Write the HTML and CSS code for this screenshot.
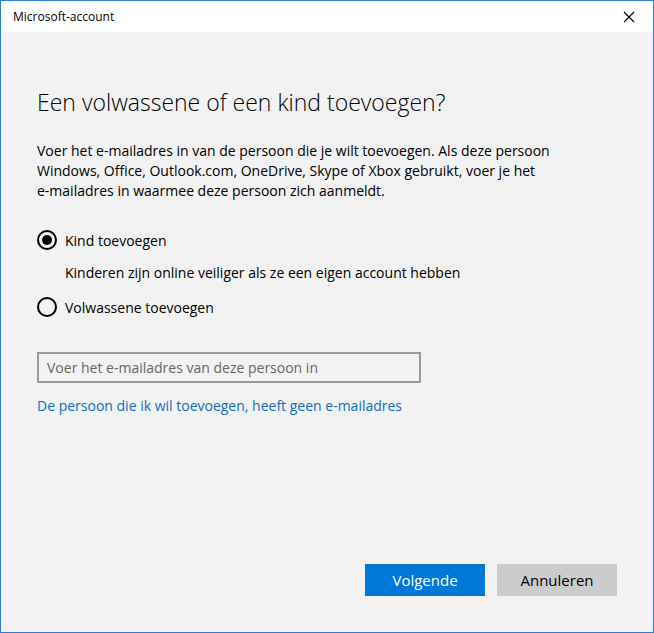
FILE: index.html
```html
<!DOCTYPE html>
<html>
<head>
<meta charset="utf-8">
<link rel="stylesheet" href="styles.css">
</head>
<body>
<div class="window">
  <div class="titlebar">
    <span class="title">Microsoft-account</span>
    <svg class="close" width="12" height="12" viewBox="0 0 12 12"><path d="M1 1L11 11M11 1L1 11" stroke="#000" stroke-width="1.1" fill="none"/></svg>
  </div>
  <div class="content">
    <h1 class="heading">Een volwassene of een kind toevoegen?</h1>
    <p class="intro">Voer het <span class="nowrap">e-mailadres</span> in van de persoon die je wilt toevoegen. Als deze persoon Windows, Office, Outlook.com, OneDrive, Skype of Xbox gebruikt, voer je het <span class="nowrap">e-mailadres</span> in waarmee deze persoon zich aanmeldt.</p>
    <div class="option first">
      <span class="radio checked"></span>
      <span class="label">Kind toevoegen</span>
    </div>
    <div class="hint">Kinderen zijn online veiliger als ze een eigen account hebben</div>
    <div class="option second">
      <span class="radio"></span>
      <span class="label">Volwassene toevoegen</span>
    </div>
    <div class="field">Voer het e-mailadres van deze persoon in</div>
    <a class="link" href="#">De persoon die ik wil toevoegen, heeft geen e-mailadres</a>
    <div class="spacer"></div>
    <div class="buttons">
      <div class="btn primary">Volgende</div>
      <div class="btn secondary">Annuleren</div>
    </div>
  </div>
</div>
</body>
</html>
```
FILE: styles.css
```css
html, body {
  margin: 0;
  padding: 0;
}
body {
  width: 654px;
  height: 633px;
  font-family: "Open Sans", "Noto Sans", sans-serif;
  color: #000;
}
.window {
  box-sizing: border-box;
  width: 654px;
  height: 633px;
  border: 1px solid #2b7cd3;
  display: flex;
  flex-direction: column;
  background: #f2f2f2;
}
.titlebar {
  height: 31px;
  background: #fff;
  display: flex;
  align-items: center;
  justify-content: space-between;
  padding: 0 18px 0 12px;
  flex: none;
}
.title {
  font-size: 12px;
  color: #000;
}
.close {
  display: block;
}
.content {
  flex: 1;
  display: flex;
  flex-direction: column;
  padding: 54px 36px 36px 36px;
}
.heading {
  margin: 0;
  font-size: 23px;
  font-weight: 300;
  line-height: 32px;
  color: #000;
}
.intro {
  margin: 23px 0 0 0;
  font-size: 14px;
  line-height: 20px;
  width: 540px;
}
.nowrap {
  white-space: nowrap;
}
.option {
  display: flex;
  align-items: center;
  height: 20px;
}
.option.first {
  margin-top: 29px;
}
.option.second {
  margin-top: 14px;
}
.radio {
  box-sizing: border-box;
  width: 20px;
  height: 20px;
  border: 2px solid #000;
  border-radius: 50%;
  display: flex;
  align-items: center;
  justify-content: center;
  margin-right: 8px;
}
.radio.checked::after {
  content: "";
  width: 10px;
  height: 10px;
  border-radius: 50%;
  background: #000;
}
.label {
  font-size: 14px;
}
.hint {
  font-size: 14px;
  margin: 13px 0 0 28px;
  line-height: 20px;
}
.field {
  box-sizing: border-box;
  margin-top: 35px;
  width: 384px;
  height: 31px;
  border: 2px solid #999;
  padding: 0 8px;
  font-size: 14px;
  line-height: 27px;
  color: #666;
}
.link {
  margin-top: 13px;
  font-size: 14px;
  line-height: 20px;
  color: #0f6fc6;
  text-decoration: none;
  align-self: flex-start;
}
.spacer {
  flex: 1;
}
.buttons {
  display: flex;
  justify-content: flex-end;
  gap: 12px;
}
.btn {
  width: 120px;
  height: 32px;
  font-size: 15px;
  line-height: 32px;
  text-align: center;
}
.primary {
  background: #0078d7;
  color: #fff;
}
.secondary {
  background: #cccccc;
  color: #000;
}
```
